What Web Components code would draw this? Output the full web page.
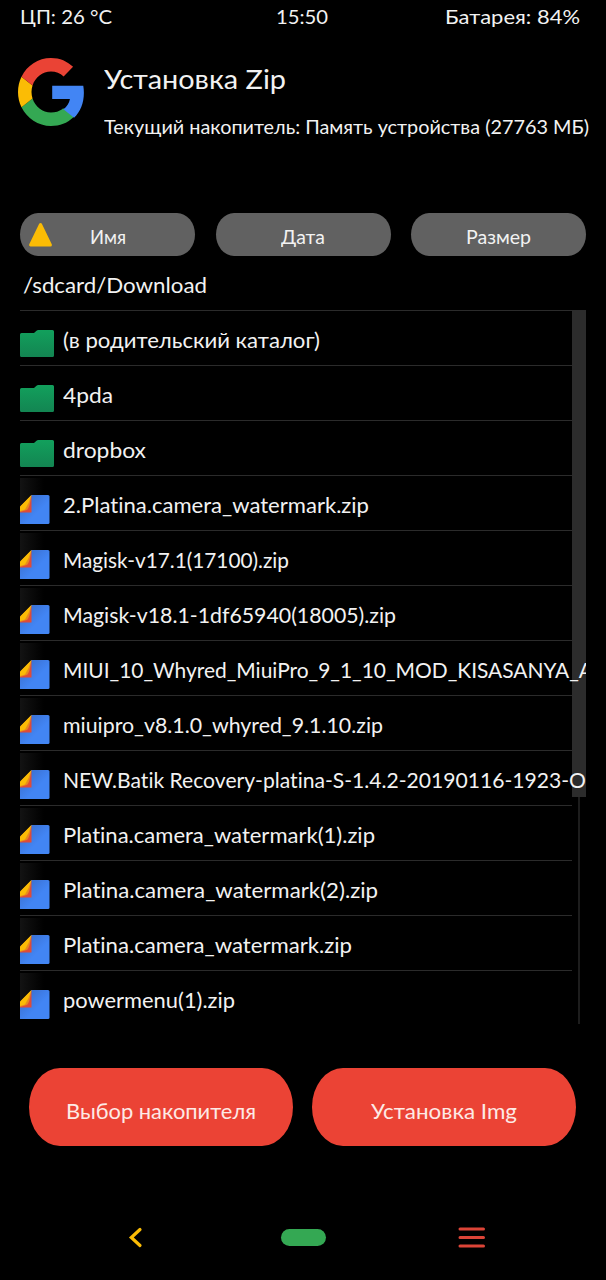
<!DOCTYPE html>
<html lang="ru">
<head>
<meta charset="utf-8">
<title>Установка Zip</title>
<style>
html,body{margin:0;background:#000}
body{width:606px;height:1280px;overflow:hidden;font-family:Lato,"Open Sans",sans-serif;font-variant-ligatures:none;color:#f2f2f2}
</style>
</head>
<body>
<recovery-screen></recovery-screen>
<script>
const define=(name,html,setup)=>customElements.define(name,class extends HTMLElement{
  constructor(){super();this.attachShadow({mode:'open'}).innerHTML=html;}
  connectedCallback(){if(setup)setup(this,this.shadowRoot);}
});

/* A single line of text, widened or narrowed to fill the given width. */
define('fit-text',`<style>:host{display:block;white-space:pre;flex:none}span{display:inline-block;transform-origin:0 50%}</style><span><slot></slot></span>`,(el,root)=>{
  const w=+el.getAttribute('w'),s=root.querySelector('span');
  el.style.width=w+'px';
  s.style.transform=`scaleX(${w/s.getBoundingClientRect().width})`;
});

define('status-bar',`<style>
:host{display:grid;grid-template-columns:1fr 52px 1fr;height:34px;padding:0 22px 0 20px;font-size:20px;line-height:33px;box-sizing:border-box}
fit-text:last-child{justify-self:end;margin-right:4px}
</style><fit-text w="92">ЦП: 26 °C</fit-text><fit-text w="52">15:50</fit-text><fit-text w="135">Батарея: 84%</fit-text>`);

define('g-logo',`<style>:host{display:block;width:66px;height:68px}svg{display:block}</style>
<svg width="66" height="68" viewBox="2 2 44 44" preserveAspectRatio="none">
<path fill="#34a853" d="M24 46c5.94 0 10.92-1.97 14.56-5.33l.6-.6-7.11-5.52-.6.6c-1.97 1.32-4.49 2.1-7.45 2.1-5.73 0-10.58-3.87-12.31-9.07L4.34 33.88C7.96 41.07 15.4 46 24 46z"/>
<path fill="#4285f4" d="M45.12 24.5c0-1.56-.14-3.06-.4-4.5H24v8.51h11.84c-.51 2.75-2.06 5.08-4.39 6.64l7.11 5.52c4.16-3.83 6.56-9.47 6.56-16.17z" transform="translate(.8)"/>
<path fill="#fbbc05" d="M11.69 28.18C11.25 26.86 11 25.45 11 24s.25-2.86.69-4.18l-7.35-5.7C2.85 17.09 2 20.45 2 24s.85 6.91 2.34 9.88l7.35-5.7z"/>
<path fill="#ea4335" d="M24 10.75c3.23 0 6.13 1.11 8.41 3.29l6.31-6.31C34.91 4.18 29.93 2 24 2 15.4 2 7.96 6.93 4.34 14.12l7.35 5.7c1.73-5.2 6.58-9.07 12.31-9.07z"/>
</svg>`);

define('page-header',`<style>
:host{display:flex;height:179px;padding:24px 0 0 18px;box-sizing:border-box}
.t{margin-left:20px}
.a{font-size:26.5px;line-height:42px}
.b{font-size:20px;line-height:30px;margin-top:11px}
</style><g-logo></g-logo><div class="t"><fit-text class="a" w="182">Установка Zip</fit-text><fit-text class="b" w="485">Текущий накопитель: Память устройства (27763 МБ)</fit-text></div>`);

define('sort-button',`<style>
:host{display:flex;position:relative;justify-content:center;width:175px;height:43px;border-radius:18px/21.5px;background:#616161;font-size:19.5px;line-height:47px}
svg{position:absolute;left:8px;top:8px;display:none}
:host([active]) svg{display:block}
</style><svg width="26" height="27"><path d="M12.5 3.5 2.6 24H22.4Z" fill="#fbbc05" stroke="#fbbc05" stroke-width="3" stroke-linejoin="round"/></svg><slot></slot>`);

define('sort-bar',`<style>:host{display:flex;justify-content:space-between;padding:0 20px}</style>
<sort-button active><fit-text w="36">Имя</fit-text></sort-button>
<sort-button><fit-text w="44">Дата</fit-text></sort-button>
<sort-button><fit-text w="65">Размер</fit-text></sort-button>`);

define('folder-icon',`<style>:host,svg{display:block}</style><svg width="35" height="29">
<defs><linearGradient id="g" x2="0" y2="1"><stop stop-color="#12a05c"/><stop offset="1" stop-color="#138552"/></linearGradient></defs>
<path d="M0 4.5Q0 3 1.5 3H14L16.5.7Q17.2 0 18.3 0H32.5Q34 0 34 1.5V25.5Q34 27 32.5 27H1.5Q0 27 0 25.5Z" fill="url(#g)"/></svg>`);

define('zip-icon',`<style>:host,svg{display:block}:host{margin-top:-19px}</style><svg width="35" height="49">
<defs><linearGradient id="s"><stop stop-color="#131313"/><stop offset="1" stop-color="#000"/></linearGradient>
<linearGradient id="b" x2="1" y2="1"><stop stop-color="#3768c5"/><stop offset=".6" stop-color="#4285f4"/></linearGradient></defs>
<path fill="url(#s)" d="M0 2H24V34H0Z"/>
<g transform="translate(0 19)"><path fill="url(#b)" d="M11.5 0H28Q29.5 0 29.5 1.5V27.5Q29.5 29 28 29H0V14Z"/>
<path fill="#df4b38" d="M11.5 1V17.5H0V13Z"/><path fill="#e78b1d" d="M11.5 0 10 8Q8.5 14.5 6.5 15L0 17V12Z"/><path fill="#fbbc05" d="M11.5 0 0 11.5V16L5 14.5 8.5 8Z"/></g></svg>`);

define('file-row',`<style>
:host{display:flex;height:55px;box-sizing:border-box;width:566px;font-size:21.5px;line-height:61px;
background:linear-gradient(#2b2b2b,#2b2b2b) 0 0/552px 1px no-repeat}
.i{width:43px;padding-top:20px;flex:none;line-height:0}
</style><div class="i"></div><slot></slot>`,(el,root)=>{
  root.querySelector('.i').append(document.createElement(el.hasAttribute('folder')?'folder-icon':'zip-icon'));
});

define('scroll-bar',`<style>
:host{display:flex;flex-direction:column;align-items:center;width:14px}
.thumb{width:14px;height:487px;background:#2c2c2c}.track{width:2px;flex:1;background:#1d1d1d}
</style><div class="thumb"></div><div class="track"></div>`);

const files=[['(в родительский каталог)',257,1],['4pda',50,1],['dropbox',83,1],['2.Platina.camera_watermark.zip',306],['Magisk-v17.1(17100).zip',226],['Magisk-v18.1-1df65940(18005).zip',333],['MIUI_10_Whyred_MiuiPro_9_1_10_MOD_KISASANYA_A',530],['miuipro_v8.1.0_whyred_9.1.10.zip',320],['NEW.Batik Recovery-platina-S-1.4.2-20190116-1923-O',523],['Platina.camera_watermark(1).zip',312],['Platina.camera_watermark(2).zip',315],['Platina.camera_watermark.zip',289],['powermenu(1).zip',172]];
define('file-list',`<style>
:host{display:grid;width:566px;height:714px;margin-left:20px;overflow:hidden}
.rows,scroll-bar{grid-area:1/1}.rows{z-index:1;min-width:0}scroll-bar{justify-self:end;height:714px}
</style><scroll-bar></scroll-bar><div class="rows">${files.map(([n,w,d])=>`<file-row ${d?'folder':''}><fit-text w="${w}">${n}</fit-text></file-row>`).join('')}</div>`);

define('action-button',`<style>
:host{display:flex;justify-content:center;width:264px;height:78px;border-radius:31px/39px;background:#eb4335;font-size:21.5px;line-height:86px;color:#fdeae6}
</style><slot></slot>`);

define('nav-bar',`<style>
:host{display:flex;align-items:center;height:24px;padding:0 120px 0 128px;justify-content:space-between}
.home{width:45px;height:17px;border-radius:8.5px;background:#34a853;margin-left:5px}svg{display:block}
</style><svg width="16" height="24"><path d="M12 4.5 3.3 12.5 12 20.5" fill="none" stroke="#fbbc05" stroke-width="3.2" stroke-linecap="round"/></svg>
<div class="home"></div>
<svg width="28" height="24"><path d="M2 4H25.5M2 12.5H25.5M2 21H25.5" stroke="#dc4437" stroke-width="3" stroke-linecap="round"/></svg>`);

define('recovery-screen',`<style>
:host{display:flex;flex-direction:column;width:606px;height:1280px;background:#000}
.path{font-size:21px;line-height:30px;margin:14px 0 10px 23px}
.actions{display:flex;gap:19px;margin:44px 0 79px 29.4px}
</style>
<status-bar></status-bar><page-header></page-header><sort-bar></sort-bar>
<fit-text class="path" w="184">/sdcard/Download</fit-text>
<file-list></file-list>
<div class="actions"><action-button><fit-text w="190">Выбор накопителя</fit-text></action-button><action-button><fit-text w="146">Установка Img</fit-text></action-button></div>
<nav-bar></nav-bar>`);
</script>
</body>
</html>
